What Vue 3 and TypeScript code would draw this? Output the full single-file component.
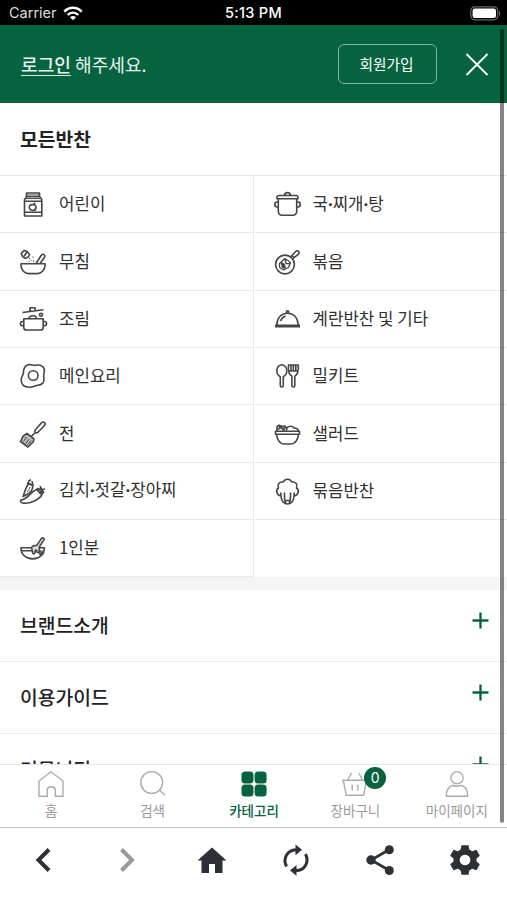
<script setup lang="ts">
interface Category {
  label: string
  icon: string
}

const categories: Category[] = [
  { label: '어린이', icon: 'jar' },
  { label: '국·찌개·탕', icon: 'pot' },
  { label: '무침', icon: 'mortar' },
  { label: '볶음', icon: 'pan' },
  { label: '조림', icon: 'stew' },
  { label: '계란반찬 및 기타', icon: 'cloche' },
  { label: '메인요리', icon: 'egg' },
  { label: '밀키트', icon: 'cutlery' },
  { label: '전', icon: 'spatula' },
  { label: '샐러드', icon: 'salad' },
  { label: '김치·젓갈·장아찌', icon: 'pepper' },
  { label: '묶음반찬', icon: 'cabbage' },
  { label: '1인분', icon: 'bowl' },
]

const sections: string[] = ['브랜드소개', '이용가이드', '커뮤니티']

// Splits a label so that its middle dots can be set in a narrower face.
const parts = (label: string): string[] => label.split(/(·)/)
</script>

<template>
  <div class="phone">
    <div class="status">
      <div class="carrier">
        <span>Carrier</span>
        <svg width="20" height="15" viewBox="0 0 20 15" fill="none" stroke="#fff" stroke-width="2.5">
          <path d="M1.3 5.6C6.4.6 13.6.6 18.7 5.6" />
          <path d="M4.6 8.9c3.2-3 7.6-3 10.8 0" />
          <path d="M7 11.3c1.8-1.6 4.2-1.6 6 0L10 14.2z" fill="#fff" stroke="none" />
        </svg>
      </div>
      <div class="time">5:13 PM</div>
      <div class="battery">
        <svg width="31" height="15" viewBox="0 0 31 15">
          <rect x=".8" y=".8" width="27" height="13" rx="4" fill="none" stroke="#666" stroke-width="1.2" />
          <rect x="2.6" y="2.6" width="23.4" height="9.4" rx="2.2" fill="#fff" />
          <path d="M29 5c1.800.8 1.800 3.900 0 4.700z" fill="#666" />
        </svg>
      </div>
    </div>

    <header class="header">
      <p class="greeting"><a class="login">로그인</a> 해주세요.</p>
      <button class="join" type="button">회원가입</button>
      <svg class="close" width="24" height="24" viewBox="0 0 24 24" stroke="#fff" stroke-width="1.9">
        <path d="M1.500 2l21 21M22.500 2l-21 21" />
      </svg>
    </header>

    <main class="content">
      <h2 class="title">모든반찬</h2>
      <div class="grid">
        <div v-for="c in categories" :key="c.icon" class="cell">
          <svg class="icon" viewBox="0 0 30 30">
            <g v-if="c.icon === 'jar'">
              <path d="M8.500 4h13v3.800h-13zM8.500 7.800l-2 3V27h17.300V10.800l-2-3M6.500 12.300h17.300M6.500 23.300h17.300" />
              <path d="M8.500 6h13M8 9.600h14" stroke-width="1" />
              <path d="M14.500 15.800c-4-1.200-4.600 5.500 0 5.700 4.600 0 4.700-6.500.5-5.700l2-2" />
            </g>
            <g v-else-if="c.icon === 'pot'">
              <path d="M12.500 6.500c.2-3.800 5.800-3.800 6 0M6.300 6.500h18.400l1.300 1.300v2H5v-2zM6.300 9.800v12.200c0 3 1.200 4.300 4 4.300h10.400c2.800 0 4-1.300 4-4.300V9.800" />
              <path d="M6.300 13H5c-3 0-3 5 0 5h1.300M24.700 13H26c3 0 3 5 0 5h-1.300" />
            </g>
            <g v-else-if="c.icon === 'mortar'">
              <path d="M3 16.700h24v1.500c0 5-4 8.400-7.500 8.400h-9C7 26.600 3 23.200 3 18.200zM18 16.500l5.500-8.500c1.700-1.700 4 .2 3 2.200L22 16.500" />
              <path d="M3.200 6.500L6.300 3.400l2.800 1.100 2.500 3-1.300 2.500-3.200 1.300-2.700-2zM9 5L6 9.300" />
              <path d="M11.500 11v1M13 12.700v1M11 14.200v1M14.800 9.700v1M15.500 13.200v1.500" stroke-width="1" />
            </g>
            <g v-else-if="c.icon === 'pan'">
              <circle cx="13" cy="17.500" r="9.400" />
              <path d="M18.500 10.100l5-5.300c2.500-2.600 5 .4 2.700 2.500l-5.700 4.700M20 8.300l2.500 2" />
              <path d="M7.500 16.500l5.500-5 5.500 4-2 5-5.500 2.300-3.500-2.500z" stroke-width="1.300" />
              <path d="M13 12l1 4.500 4.500.2M9 16l3.500 5.500" stroke-width="1.300" />
              <path d="M9.500 15.500l3 1.500 1 4-3.500-.5z" fill="#454545" stroke-width=".8" />
            </g>
            <g v-else-if="c.icon === 'stew'">
              <path d="M4.500 8.500L25.500 5.700M12 7.200V3.700h5v2.700M11 14.700c.3-4 7.500-4 7.500 0M5.800 14.700h19.400v8.700c0 1.700-1 2.600-2.600 2.600H8.400c-1.600 0-2.600-.9-2.600-2.600z" />
              <path d="M5.800 17.500H4.300c-2.500 0-2.500 4.200 0 4.200h1.500M25.200 17.500h1.500c2.500 0 2.500 4.200 0 4.200h-1.500" />
              <circle cx="23" cy="10.700" r="1.500" />
            </g>
            <g v-else-if="c.icon === 'cloche'">
              <path d="M3 22.600h25M4.700 21C5.500 13 10 9.200 15.500 9.200S25.500 13 26.300 21M3 21.300h25" />
              <circle cx="15.500" cy="7.900" r="1.200" />
              <path d="M8.500 17c1-2.500 2.500-4.200 5-5" />
            </g>
            <g v-else-if="c.icon === 'egg'">
              <path d="M9.500 4c3-1.300 5.500 1 8.500.3 4-1 8.600.8 8.400 5.500-.1 3-1.400 4-.5 7.500.8 4-2 6.600-6 7-3.200.3-4.500 2-8.400 2-5 0-8.300-2.700-8.300-7.500 0-3.500 2.300-4.300 2.300-7.500 0-3.500 1.200-6 4-7.300z" />
              <circle cx="15.200" cy="14.500" r="4.800" />
            </g>
            <g v-else-if="c.icon === 'cutlery'">
              <path d="M8.300 15.800c-5-2.700-4.700-11 1.500-12 6.200 1 6.500 9.300 1.500 12v8.700c0 2-3 2-3 0z" />
              <path d="M16.500 4h9.700c.5 5.500.2 9.300-3.400 11.300v9.200c0 2-2.900 2-2.900 0v-9.200C16.200 13.300 16 9.500 16.500 4zM19 4.500V10M21.400 4.500V10M23.800 4.500V10M17 10h9" />
            </g>
            <g v-else-if="c.icon === 'spatula'">
              <path d="M17.300 11l6.200-7.200c2.300-1.800 4.600.2 3 2.700l-6.800 7c-2 1-3.800-.6-2.400-2.500zM17 13.700l-3.500 3.500" />
              <path d="M9 14.500l7 5.300-.7 3L10 28l-7.500-5.500L5 17.200z" fill="#bbb" />
              <path d="M8.500 18l-3 4.500M11 20l-3 4.500M13 21.500l-3 4" stroke-width="1" />
            </g>
            <g v-else-if="c.icon === 'salad'">
              <path d="M3.500 12.200h24v3h-24zM4.500 15.200c.3 4 2.500 9.800 8 9.800h6c5.500 0 7.700-5.800 8-9.800M5 12V7.500c2-2 4-.7 5 .3 1-1.300 3.500-1 4 .5l1 3M14.500 9.500c1.500-3 6-3 7.500-.5 2.500-.2 4 1 4.500 3M6 10.500L9 8M10 10.500l3-2M7 7.500l6 4" />
            </g>
            <g v-else-if="c.icon === 'pepper'">
              <path d="M5 20.500C7 15 8 11 10.500 7.800l4 1.200c1.500 5-3.500 9-9.500 11.500z" />
              <path d="M3 24c7-.5 10-9.500 17-11l4.500 4C23 23.500 11 28.300 4.500 27 2.500 26.600 2 24.500 3 24z" />
              <path d="M10 8.300l1-3.500 2-1M9 7l6 2.500-1-4.200M18 13l5 5 .5-3.500M19 12.500l5 1 3-.5M22 10l1.500 3L26 17" />
              <path d="M12 11c-.5 2-1.500 3.500-3 5" stroke-width="1" />
            </g>
            <g v-else-if="c.icon === 'cabbage'">
              <path d="M9 20c-4.500-1-5.700-5.700-2.500-8-1.500-4 1-6.500 4.800-6 1.700-3.700 6.700-3.700 8.400 0 3.800-.5 6.300 2 4.800 6 3.200 2.300 2 7-2.500 8-.3 5-3 8-6.500 8S9.300 25 9 20z" />
              <path d="M12.500 16.500V22c0 3 1 4.300 1.500 5.500M18.500 16.500V22c0 3-1 4.300-1.500 5.500M9 20c-.3-1.500-.3-2.500 0-3.500M22 20c.3-1.500.3-2.500 0-3.500M12.500 24.500h6" />
            </g>
            <g v-else>
              <path d="M3 14.700h11M23 14.700h3.300c.4 6.600-5 11.200-11.600 11.200S2.800 21.300 3 14.700zM3.500 17.700h11" />
              <path d="M13.500 14.500l2-1.800 3.300-.3 4.700-7c1.500-1.300 3.300 0 2.300 1.700l-4.500 6.800v4.300c-.2 2-2.300 2-2.500 0 0-1.500-1.800-1.500-1.800 0v1.500c-.2 1.500-2.200 1.500-2.300 0z" fill="#ddd" />
              <path d="M22 17v4.500c1.700 1 2-1.500 2-4" />
            </g>
          </svg>
          <span class="label"><template v-for="(p, i) in parts(c.label)" :key="i"><b v-if="p === '·'" class="dot">·</b><template v-else>{{ p }}</template></template></span>
        </div>
        <div class="cell"></div>
      </div>
      <div class="band"></div>
      <div v-for="s in sections" :key="s" class="section">
        <span>{{ s }}</span>
        <svg width="17" height="17" viewBox="0 0 17 17" stroke="#05633f" stroke-width="2.300">
          <path d="M.5 8.500h16M8.500.5v16" />
        </svg>
      </div>
    </main>

    <nav class="tabs">
      <div class="tab">
        <svg viewBox="0 0 28 28"><path d="M2 26.300V11L14 1.800 26 11v15.300h-7.700V20.500c0-5-8.100-5-8.100 0v5.800z" /></svg>
        <span>홈</span>
      </div>
      <div class="tab">
        <svg viewBox="0 0 28 28"><circle cx="12.700" cy="12.500" r="10.900" /><path d="M20.500 20.300l5.700 5" /></svg>
        <span>검색</span>
      </div>
      <div class="tab active">
        <svg viewBox="0 0 28 28">
          <rect x="1.500" y="1.500" width="12" height="11.900" rx="3.500" />
          <rect x="14.600" y="1.500" width="12" height="11.900" rx="3.500" />
          <rect x="1.500" y="14.600" width="12" height="11.900" rx="3.500" />
          <rect x="14.600" y="14.600" width="12" height="11.900" rx="3.500" />
        </svg>
        <span>카테고리</span>
      </div>
      <div class="tab">
        <svg viewBox="0 0 28 28"><path d="M1.300 10.300h25.400M2.300 10.300l3 15h17.300l3-15M6.800 10l3.700-7M21.500 10l-3.700-7M11.200 14.500v6M16.800 14.500v6" /></svg>
        <span>장바구니</span>
        <b class="badge">0</b>
      </div>
      <div class="tab">
        <svg viewBox="0 0 28 28"><circle cx="14" cy="7.700" r="6.100" /><path d="M3.300 25.500c-.3-6 3.500-10 7.300-10 2.400 1 4.500 1 6.900 0 3.700 0 7.500 4 7.200 10 0 .5-.3.800-.8.800H4.100c-.5 0-.8-.3-.8-.8z" /></svg>
        <span>마이페이지</span>
      </div>
    </nav>

    <footer class="toolbar">
      <div class="tool">
        <svg viewBox="0 0 32 32" fill="none" stroke="#2d3035" stroke-width="4"><path d="M22 5.500L11.500 16 22 26.500" /></svg>
      </div>
      <div class="tool">
        <svg viewBox="0 0 32 32" fill="none" stroke="#999" stroke-width="4"><path d="M10.500 5.500L21 16 10.500 26.500" /></svg>
      </div>
      <div class="tool">
        <svg viewBox="0 0 32 32" fill="#2d3035"><path d="M16 3.500L30.500 16.500H26.500V29H19v-9h-6v9H5.500V16.500h-4z" /></svg>
      </div>
      <div class="tool">
        <svg viewBox="0 0 32 32">
          <g fill="none" stroke="#2d3035" stroke-width="3">
            <path d="M6.500 22.500C2.500 14.500 7 6.200 16 5.800" />
            <path d="M25.500 10c4 8-.5 16.200-9.500 16.600" />
          </g>
          <path d="M15.500.5l6.500 5.300-6.500 5.500zM16.500 21L10 26.500l6.500 5.300z" fill="#2d3035" />
        </svg>
      </div>
      <div class="tool">
        <svg viewBox="0 0 32 32" fill="#2d3035">
          <path d="M25.500 5.500L7 16l18.500 10.500" fill="none" stroke="#2d3035" stroke-width="2.600" />
          <circle cx="7" cy="16" r="4.700" /><circle cx="25.300" cy="5.700" r="4.500" /><circle cx="25.300" cy="26.500" r="4.500" />
        </svg>
      </div>
      <div class="tool">
        <svg viewBox="0 0 32 32" fill="#2d3035">
          <path fill-rule="evenodd" d="M12.500 1.200h7l.8 4.300 2.900 1.700 4.300-1.500 3.300 6-3.300 2.800v3l3.300 2.800-3.300 6-4.300-1.500-2.900 1.700-.8 4.300h-7l-.8-4.300-2.900-1.700-4.300 1.500-3.300-6 3.300-2.800v-3l-3.300-2.800 3.300-6 4.300 1.500 2.900-1.700zM16 10.700a5.300 5.300 0 1 0 .01 0z" />
        </svg>
      </div>
    </footer>
    <div class="scrollbar"></div>
  </div>
</template>

<style>
body {
  margin: 0;
  background: #fff;
}
</style>

<style scoped>
.phone {
  position: relative;
  display: flex;
  flex-direction: column;
  width: 507px;
  height: 900px;
  overflow: hidden;
  background: #fff;
  color: #222;
  font-family: "Noto Sans CJK KR", sans-serif;
}
.status {
  display: grid;
  grid-template-columns: 1fr auto 1fr;
  align-items: center;
  flex: none;
  box-sizing: border-box;
  height: 25px;
  padding: 1px 6px 0 9px;
  background: #000;
  color: #fff;
  font: 14.5px/24px Inter, sans-serif;
}
.carrier {
  display: flex;
  align-items: center;
  gap: 6px;
  color: #ddd;
}
.time {
  margin-right: 3px;
  font-weight: 500;
  letter-spacing: 0.3px;
}
.battery {
  display: flex;
  justify-content: flex-end;
}
.header {
  display: flex;
  align-items: center;
  flex: none;
  box-sizing: border-box;
  height: 78px;
  padding: 0 18px 0 21px;
  background: #05633f;
  color: #fff;
}
.greeting {
  flex: 1;
  margin: 0;
  font-size: 18.1px;
  line-height: 24px;
  color: #e8f3ee;
}
.login {
  display: inline-block;
  border-bottom: 1.5px solid #d5e7de;
  font-weight: 500;
  line-height: 22px;
}
.join {
  box-sizing: border-box;
  width: 99px;
  height: 40px;
  margin-right: 28px;
  padding: 0 2px 2px 0;
  border: 1px solid #83b29f;
  border-radius: 6px;
  background: none;
  color: #fff;
  font-family: inherit;
  font-size: 14.7px;
}
.content {
  flex: 1;
  min-height: 0;
  overflow: hidden;
}
.title {
  box-sizing: border-box;
  height: 72px;
  margin: 0;
  padding-left: 20px;
  font-size: 19.3px;
  font-weight: 700;
  line-height: 72px;
}
.grid {
  display: grid;
  grid-template-columns: 254px 1fr;
  grid-auto-rows: 57.35px;
  border-top: 1.5px solid #e9e9e9;
}
.cell {
  display: flex;
  align-items: center;
  gap: 11px;
  box-sizing: border-box;
  padding-left: 18px;
  border-bottom: 1.5px solid #e9e9e9;
  font-size: 16.8px;
  color: #303030;
}
.cell:nth-child(odd) {
  border-right: 1.5px solid #e9e9e9;
}
.cell:nth-child(even) {
  margin-left: 1px;
  padding-left: 16.5px;
}
.cell:last-child {
  border-bottom: 0;
}
.label {
  padding-bottom: 2px;
  line-height: 24px;
}
.dot {
  font-family: "Noto Sans", sans-serif;
  font-weight: 700;
}
.icon {
  flex: none;
  width: 30px;
  height: 30px;
  fill: none;
  stroke: #454545;
  stroke-width: 1.6;
  stroke-linejoin: round;
}
.band {
  height: 13px;
  background: #f5f5f5;
}
.section {
  display: flex;
  justify-content: space-between;
  box-sizing: border-box;
  height: 72px;
  padding: 0 18px 0 20px;
  border-bottom: 1.5px solid #ebebeb;
  font-size: 19.3px;
  font-weight: 500;
  line-height: 70px;
}
.section svg {
  margin-top: 22px;
}
.tabs {
  display: grid;
  grid-template-columns: repeat(5, 1fr);
  flex: none;
  box-sizing: border-box;
  height: 63px;
  border-top: 1.5px solid #e6e6e6;
}
.tab {
  position: relative;
  display: flex;
  flex-direction: column;
  align-items: center;
  padding: 5px 0 0 1px;
  color: #999;
  font-size: 13.5px;
  line-height: 20px;
}
.tab svg {
  width: 28px;
  height: 28px;
  fill: none;
  stroke: #aaa;
  stroke-width: 1.4;
}
.tab span {
  margin-top: 2px;
}
.active {
  color: #05633f;
  font-weight: 500;
}
.tab.active svg {
  fill: #05633f;
  stroke: none;
}
.badge {
  position: absolute;
  top: 2px;
  left: 60px;
  width: 22px;
  height: 22px;
  border-radius: 50%;
  background: #05633f;
  color: #fff;
  font: 14px/22px Inter, sans-serif;
  text-align: center;
}
.toolbar {
  display: grid;
  grid-template-columns: repeat(6, 1fr);
  flex: none;
  box-sizing: border-box;
  height: 73px;
  padding: 16px 0 0 1px;
  border-top: 1.5px solid #c4c4c4;
}
.tool {
  display: flex;
  justify-content: center;
}
.tool svg {
  width: 32px;
  height: 32px;
}
.scrollbar {
  position: absolute;
  top: 29px;
  left: 500px;
  width: 3.5px;
  height: 794px;
  border-radius: 2px;
  background: rgba(0, 0, 0, 0.48);
}
</style>
